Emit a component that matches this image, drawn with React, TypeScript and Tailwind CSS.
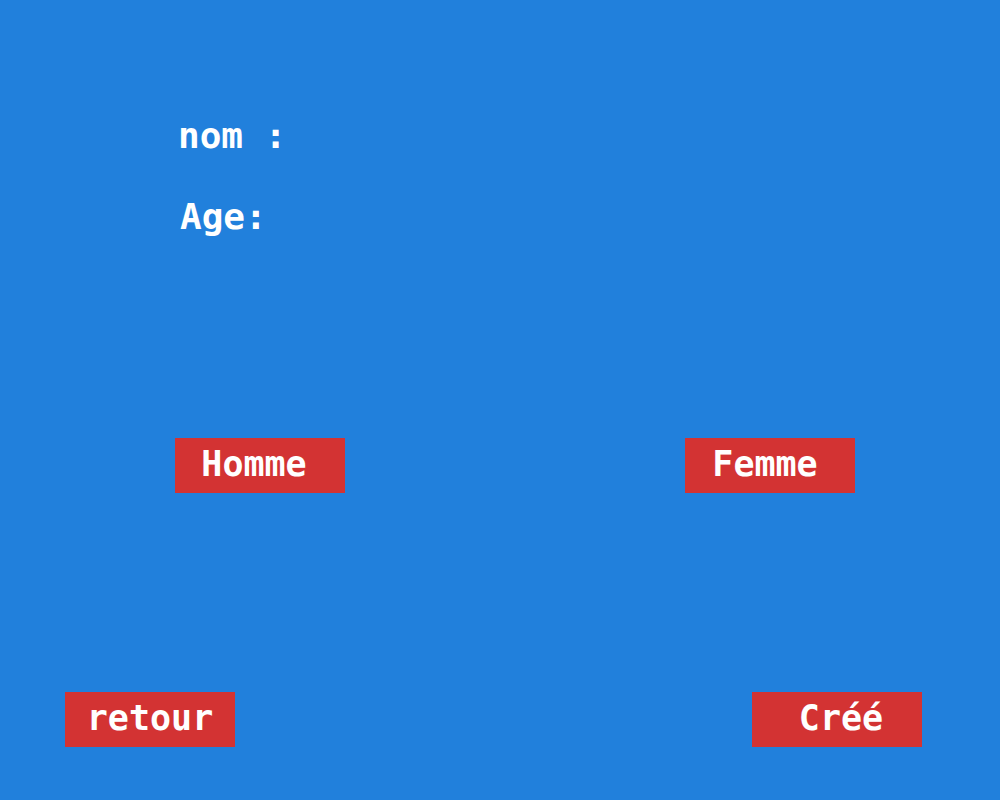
import React from 'react';

const Choice = ({ label, className = '' }: { label: string; className?: string }) => (
  <button
    className={`w-[170px] h-[55px] pb-[3px] bg-[#d33333] text-white flex items-center justify-center text-[35px] leading-none ${className}`}
  >
    {label}
  </button>
);

export default function App() {
  return (
    <div className="w-full h-[800px] bg-[#2180dc] flex flex-col text-white font-bold font-['DejaVu_Sans_Mono','Liberation_Mono',monospace]">
      {/* Form labels */}
      <div className="pl-[178px] pt-[114px] text-[36px] leading-[44px]">
        <p>nom :</p>
        <p className="mt-[37px] pl-[2px]">Age:</p>
      </div>

      {/* Gender choice */}
      <div className="mt-[199px] flex pl-[175px] gap-[340px]">
        <Choice label="Homme" className="pr-[12px]" />
        <Choice label="Femme" className="pr-[10px]" />
      </div>

      {/* Actions */}
      <div className="mt-[199px] flex justify-between pl-[65px] pr-[78px]">
        <Choice label="retour" />
        <Choice label="Créé" className="pl-[8px]" />
      </div>
    </div>
  );
}
